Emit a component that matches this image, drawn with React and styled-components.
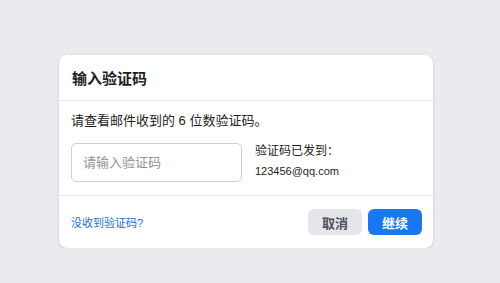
import React from 'react';
import styled, { createGlobalStyle } from 'styled-components';

const GlobalStyle = createGlobalStyle`
  body {
    margin: 0;
    background: #e9ebee;
    font-family: "Liberation Sans", Arial, "Noto Sans CJK SC", sans-serif;
    color: #1c1e21;
  }
`;

const Page = styled.div`
  padding: 55px 0 0 59px;
`;

const Card = styled.div`
  width: 374px;
  background: #fff;
  border-radius: 8px;
  box-shadow: 0 1px 3px rgba(0, 0, 0, 0.12), 0 0 1px rgba(0, 0, 0, 0.08);
`;

const Header = styled.div`
  height: 45px;
  padding: 0 13px;
  display: flex;
  align-items: center;
  border-bottom: 1px solid #e4e6eb;
  font-size: 15px;
  font-weight: bold;
  color: #1c1e21;
`;

const Body = styled.div`
  padding: 12px 12px 13px;
`;

const Hint = styled.div`
  font-size: 13px;
  line-height: 16px;
  color: #1c1e21;
`;

const CodeRow = styled.div`
  display: flex;
  gap: 13px;
  margin-top: 14px;
`;

const CodeInput = styled.input`
  box-sizing: border-box;
  width: 171px;
  height: 39px;
  padding: 0 11px;
  border: 1px solid #ccd0d5;
  border-radius: 5px;
  font-family: inherit;
  font-size: 13px;
  color: #1c1e21;
  outline: none;

  &::placeholder {
    color: #8d949e;
  }
`;

const SentInfo = styled.div`
  display: flex;
  flex-direction: column;
  gap: 4px;
`;

const SentLabel = styled.div`
  font-size: 12px;
  line-height: 16px;
  color: #1c1e21;
`;

const SentEmail = styled.div`
  font-size: 11px;
  line-height: 16px;
  color: #1c1e21;
`;

const Footer = styled.div`
  height: 52px;
  padding: 0 11px 0 12px;
  display: flex;
  align-items: center;
  justify-content: space-between;
  border-top: 1px solid #e4e6eb;
`;

const Link = styled.a`
  font-size: 11px;
  color: #216fdb;
  text-decoration: none;
  cursor: pointer;
`;

const Actions = styled.div`
  display: flex;
  gap: 6px;
`;

const Button = styled.button`
  width: 54px;
  height: 26px;
  border: none;
  border-radius: 6px;
  font-family: inherit;
  font-size: 13px;
  font-weight: bold;
  cursor: pointer;
  background: ${(p) => (p.primary ? '#1877f2' : '#e4e6eb')};
  color: ${(p) => (p.primary ? '#fff' : '#4b4f56')};
`;

export default function App() {
  return (
    <>
      <GlobalStyle />
      <Page>
        <Card>
          <Header>输入验证码</Header>
          <Body>
            <Hint>请查看邮件收到的 6 位数验证码。</Hint>
            <CodeRow>
              <CodeInput type="text" placeholder="请输入验证码" />
              <SentInfo>
                <SentLabel>验证码已发到：</SentLabel>
                <SentEmail>123456@qq.com</SentEmail>
              </SentInfo>
            </CodeRow>
          </Body>
          <Footer>
            <Link>没收到验证码?</Link>
            <Actions>
              <Button>取消</Button>
              <Button primary>继续</Button>
            </Actions>
          </Footer>
        </Card>
      </Page>
    </>
  );
}
